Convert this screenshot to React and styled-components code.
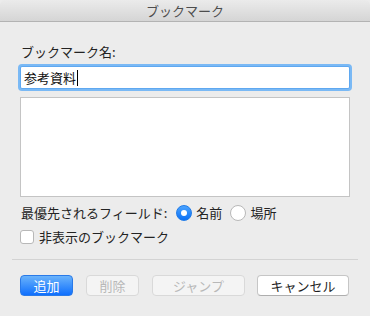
import React from "react";
import styled, { createGlobalStyle } from "styled-components";

const Global = createGlobalStyle`
  html, body { margin: 0; padding: 0; background: #ececec; }
  body { font-family: "Noto Sans CJK JP", "Noto Sans", sans-serif; }
  * { box-sizing: border-box; }
`;

const Window = styled.div`
  width: 370px;
  height: 316px;
  background: #ececec;
  display: flex;
  flex-direction: column;
  font-size: 13px;
  color: #232323;
  overflow: hidden;
`;

const TitleBar = styled.div`
  height: 22px;
  flex: none;
  display: flex;
  align-items: center;
  justify-content: center;
  background: linear-gradient(#ebebeb, #d5d5d5);
  border-bottom: 1px solid #b3b3b3;
  border-radius: 5px 5px 0 0;
  color: #4d4d4d;
  font-size: 13px;
  line-height: 16px;
`;

const Body = styled.div`
  padding: 22px 20px 0;
  display: flex;
  flex-direction: column;
`;

const Label = styled.div`
  height: 16px;
  line-height: 16px;
  padding-left: 1px;
`;

const TextInput = styled.div`
  margin-top: 6px;
  height: 23px;
  background: #fff;
  border: 1px solid #5fa8f0;
  box-shadow: 0 0 0 2px #7ab9f5;
  border-radius: 2px;
  display: flex;
  align-items: center;
  padding-left: 3px;
  line-height: 16px;
  color: #111;
`;

const Caret = styled.span`
  display: inline-block;
  width: 1px;
  height: 16px;
  background: #000;
  margin-left: 1px;
`;

const ListBox = styled.div`
  margin-top: 8px;
  height: 100px;
  background: #fff;
  border: 1px solid #c4c4c4;
`;

const Row = styled.div`
  display: flex;
  align-items: center;
  height: 20px;
  margin-top: ${(p) => p.$mt}px;
  padding-left: 1px;
  line-height: 16px;
`;

const Radio = styled.span`
  width: 16px;
  height: 16px;
  border-radius: 50%;
  flex: none;
  margin-left: ${(p) => p.$ml}px;
  margin-right: 4px;
  display: flex;
  align-items: center;
  justify-content: center;
  background: ${(p) => (p.$on ? "linear-gradient(#4aa3ff, #0b70f5)" : "#fff")};
  border: 1px solid ${(p) => (p.$on ? "#1f7be8" : "#b8b8b8")};
  &::after {
    content: "";
    display: ${(p) => (p.$on ? "block" : "none")};
    width: 6px;
    height: 6px;
    border-radius: 50%;
    background: #fff;
  }
`;

const Check = styled.span`
  width: 14px;
  height: 14px;
  flex: none;
  margin-left: -1px;
  margin-right: 5px;
  background: #fff;
  border: 1px solid #b8b8b8;
  border-radius: 3px;
`;

const Separator = styled.div`
  margin: 12px 12px 0;
  height: 1px;
  background: #d3d3d3;
`;

const ButtonRow = styled.div`
  display: flex;
  padding: 15px 20px 0;
`;

const Button = styled.div`
  width: ${(p) => p.$w}px;
  margin-left: ${(p) => p.$ml}px;
  height: 21px;
  border-radius: 4px;
  display: flex;
  align-items: center;
  justify-content: center;
  font-size: 13px;
  line-height: 16px;
  ${(p) =>
    p.$kind === "primary"
      ? `background: linear-gradient(#6ab3fb, #0f6ffd);
         border: 1px solid #2a7ae8;
         color: #fff;`
      : p.$kind === "disabled"
      ? `background: #f4f4f4;
         border: 1px solid #d9d9d9;
         color: #b8b8b8;`
      : `background: #fff;
         border: 1px solid #c6c6c6;
         border-bottom-color: #aeaeae;
         color: #1e1e1e;`}
`;

export default function App() {
  return (
    <>
      <Global />
      <Window>
        <TitleBar>ブックマーク</TitleBar>
        <Body>
          <Label>ブックマーク名:</Label>
          <TextInput>
            参考資料<Caret />
          </TextInput>
          <ListBox />
          <Row $mt={6}>
            最優先されるフィールド:
            <Radio $on $ml={9} />
            名前
            <Radio $ml={8} />
            場所
          </Row>
          <Row $mt={4}>
            <Check />
            非表示のブックマーク
          </Row>
        </Body>
        <Separator />
        <ButtonRow>
          <Button $kind="primary" $w={53} $ml={0}>追加</Button>
          <Button $kind="disabled" $w={53} $ml={13}>削除</Button>
          <Button $kind="disabled" $w={93} $ml={13}>ジャンプ</Button>
          <Button $w={92} $ml={12}>キャンセル</Button>
        </ButtonRow>
      </Window>
    </>
  );
}
